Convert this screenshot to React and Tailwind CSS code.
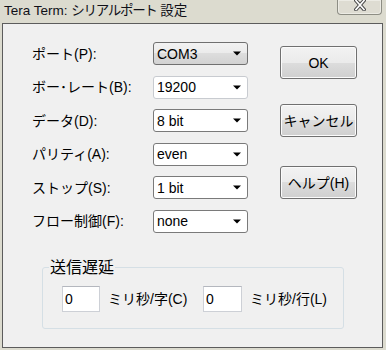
import React from "react";

const font = "font-['Liberation_Sans','Noto_Sans_CJK_JP',sans-serif]";

function Arrow() {
  return (
    <svg width="8" height="5" viewBox="0 0 8 5" className="shrink-0">
      <polygon points="0,0.5 8,0.5 4,4.5" fill="#000" />
    </svg>
  );
}

function Combo({ value, variant }) {
  const styles = {
    focus:
      "border-[#707070] bg-[linear-gradient(to_bottom,#f2f2f2_0%,#ebebeb_50%,#dddddd_50%,#d2d2d2_100%)]",
    edit: "border-[#c8cbd0] bg-white",
    list: "border-[#7a7a7a] bg-white",
  };
  return (
    <div
      className={`w-[95px] h-[23px] border rounded-[3px] flex items-center justify-between pl-[3px] pr-[6px] ${styles[variant]}`}
    >
      <span className="text-[14px] leading-[16px] text-black">{value}</span>
      <Arrow />
    </div>
  );
}

function Button({ children, className = "" }) {
  return (
    <div
      className={`w-[77px] h-[33px] border border-[#707070] rounded-[3px] shadow-[inset_0_0_0_1px_#fbfbfb] bg-[linear-gradient(to_bottom,#f2f2f2_0%,#ebebeb_50%,#dddddd_50%,#cfcfcf_100%)] flex items-center justify-center whitespace-nowrap text-[14px] leading-[16px] text-black ${className}`}
    >
      {children}
    </div>
  );
}

export default function App() {
  const rows = [
    { label: "ポート(P):", value: "COM3", variant: "focus" },
    { label: "ボー･レート(B):", value: "19200", variant: "edit" },
    { label: "データ(D):", value: "8 bit", variant: "list" },
    { label: "パリティ(A):", value: "even", variant: "list" },
    { label: "ストップ(S):", value: "1 bit", variant: "list" },
    { label: "フロー制御(F):", value: "none", variant: "list" },
  ];

  return (
    <div className={`w-[386px] h-[350px] bg-[#dcdbcf] flex flex-col ${font}`}>
      <div className="h-[23px] flex justify-between">
        <div className="pl-[4px] pt-[2px] text-[13.5px] leading-[18px] text-[#101018] whitespace-nowrap">
          Tera Term: <span className="tracking-[-1.3px]">シリアルポート</span> 設定
        </div>
        <div className="mr-[4px] w-[45px] h-[15px] border border-t-0 border-[#8d8d84] rounded-b-[4px] bg-[#dedcd2] shadow-[inset_0_0_0_1px_#ecebe4] flex items-start justify-center">
          <svg width="12" height="11" viewBox="0 0 12 11">
            <path d="M2 0.5 L10 9.5 M10 0.5 L2 9.5" stroke="#4a4a4a" strokeWidth="3.6" strokeLinecap="square" />
            <path d="M2 0.5 L10 9.5 M10 0.5 L2 9.5" stroke="#ffffff" strokeWidth="1.6" strokeLinecap="square" />
          </svg>
        </div>
      </div>

      <div className="ml-[2px] w-[381px] h-[325px] border border-[#5c5c5c] bg-[#f0f0f0] pt-[18px] pl-[29px]">
        <div className="flex">
          <div className="flex flex-col gap-[10.6px]">
            {rows.map((r) => (
              <div key={r.label} className="flex items-center h-[23px]">
                <div className="w-[121px] text-[14px] leading-[16px] text-black whitespace-nowrap">
                  {r.label}
                </div>
                <Combo value={r.value} variant={r.variant} />
              </div>
            ))}
          </div>
          <div className="ml-[32px] flex flex-col">
            <Button className="mt-[4px]">OK</Button>
            <Button className="mt-[25px]">キャンセル</Button>
            <Button className="mt-[29px]">ヘルプ(H)</Button>
          </div>
        </div>

        <fieldset className="mt-[25px] ml-[10px] w-[302px] border border-[#d5dfe5] rounded-[3px] pb-[16px]">
          <legend className="ml-[6px] px-[1px] text-[16px] leading-[20px] text-black">送信遅延</legend>
          <div className="mt-[8px] pl-[19px] flex items-center">
            <div className="w-[38px] h-[26px] bg-white border border-[#cdd0d6] border-t-[#b4b7be] pl-[2px] flex items-center text-[14px] leading-[16px] text-black">
              0
            </div>
            <div className="ml-[8px] w-[87px] text-[14px] leading-[16px] text-black whitespace-nowrap">
              ミリ秒/字(C)
            </div>
            <div className="ml-[8px] w-[39px] h-[26px] bg-white border border-[#cdd0d6] border-t-[#b4b7be] pl-[2px] flex items-center text-[14px] leading-[16px] text-black">
              0
            </div>
            <div className="ml-[8px] text-[14px] leading-[16px] text-black whitespace-nowrap">
              ミリ秒/行(L)
            </div>
          </div>
        </fieldset>
      </div>
    </div>
  );
}
